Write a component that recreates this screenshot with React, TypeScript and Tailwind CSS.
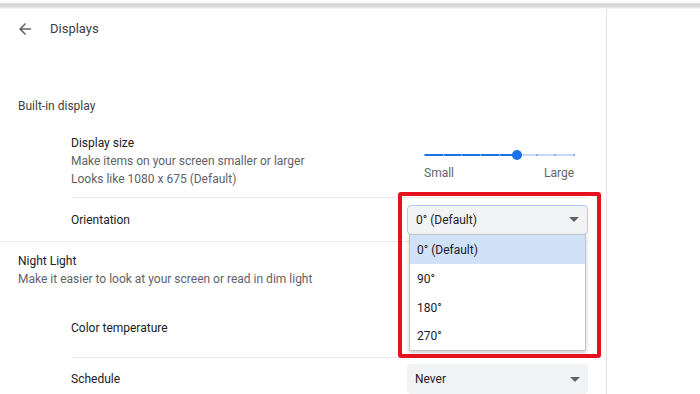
import React from "react";

const ticks = [0, 1, 2, 3, 4, 5, 6, 7, 8];
const thumbIndex = 5;

function Caret() {
  return (
    <svg width="10" height="5" viewBox="0 0 10 5" className="shrink-0">
      <path d="M0 0h10L5 5z" fill="#5f6368" />
    </svg>
  );
}

function SizeSlider() {
  const step = 149 / 8;
  return (
    <div className="flex w-[150px] flex-col">
      <div className="relative h-[20px]">
        <div className="absolute left-0 right-0 top-[9px] h-[2px] bg-[#c6dafc]" />
        <div
          className="absolute left-0 top-[9px] h-[2px] bg-[#1a73e8]"
          style={{ width: thumbIndex * step }}
        />
        {ticks.map((t) => (
          <div
            key={t}
            className={
              t < thumbIndex
                ? "absolute top-[9px] h-[2px] w-[1px] bg-[#8ab4f8]"
                : "absolute top-[9px] h-[2px] w-[2px] bg-[#8ab4f8]"
            }
            style={{ left: t * step }}
          />
        ))}
        <div
          className="absolute top-[5px] size-[10px] -translate-x-1/2 rounded-full bg-[#1a73e8]"
          style={{ left: thumbIndex * step }}
        />
      </div>
      <div className="mt-[1px] flex justify-between text-[12px] leading-[14px] text-[#5f6368]">
        <span>Small</span>
        <span>Large</span>
      </div>
    </div>
  );
}

export default function App() {
  return (
    <div className="relative h-[394px] w-[700px] overflow-hidden bg-white font-['Roboto',sans-serif] text-[12px] text-[#202124]">
      <div className="h-[9px] bg-[linear-gradient(to_bottom,#ffffff_0px,#f4f4f4_3px,#cfcfcf_4px,#dedede_7px,#ffffff_9px)]" />
      <div className="flex h-[385px]">
        <main className="w-[607px] shrink-0 border-r border-[#e3e3e3] pr-[18px]">
          <div className="flex h-[40px] items-center">
            <svg
              width="18"
              height="18"
              viewBox="0 0 24 24"
              className="ml-[16px] shrink-0"
            >
              <path
                d="M20 11H7.83l5.59-5.59L12 4l-8 8 8 8 1.41-1.41L7.83 13H20v-2z"
                fill="#5f6368"
              />
            </svg>
            <span className="ml-[16px] text-[13px] text-[#3c4043]">Displays</span>
          </div>

          <div className="mt-[47px] pl-[18px] leading-[20px] text-[#3c4043]">
            Built-in display
          </div>

          <div className="ml-[71px] mt-[18px] flex justify-between border-b border-[#ebebeb] pb-[9px]">
            <div className="flex flex-col leading-[18px]">
              <span className="text-[#202124]">Display size</span>
              <span className="text-[#5f6368]">
                Make items on your screen smaller or larger
              </span>
              <span className="text-[#5f6368]">Looks like 1080 x 675 (Default)</span>
            </div>
            <div className="mr-[14px] mt-[11px]">
              <SizeSlider />
            </div>
          </div>

          <div className="relative ml-[71px] flex h-[43px] items-center justify-between">
            <span>Orientation</span>
            <div className="flex h-[30px] w-[181px] items-center justify-between rounded-[4px] border border-[#aecbfa] bg-[#f1f3f4] pl-[8px] pr-[8px]">
              <span>0° (Default)</span>
              <Caret />
            </div>
            <div className="absolute right-[2px] top-[36px] z-10 w-[177px] border border-[#c4c4c4] bg-white shadow-[0_2px_4px_rgba(0,0,0,0.2)]">
              <div className="flex h-[29px] items-center bg-[#cfe2f8] pl-[7px]">0° (Default)</div>
              <div className="flex h-[29px] items-center pl-[7px]">90°</div>
              <div className="flex h-[29px] items-center pl-[7px]">180°</div>
              <div className="flex h-[28px] items-center pl-[7px]">270°</div>
            </div>
            <div className="pointer-events-none absolute right-[-13px] top-[-6px] z-20 h-[166px] w-[203px] rounded-[3px] border-[4px] border-[#e5121d]" />
          </div>

          <div className="border-t border-[#ebebeb] pl-[18px] pt-[10px] leading-[18px]">
            <div>Night Light</div>
            <div className="text-[#5f6368]">
              Make it easier to look at your screen or read in dim light
            </div>
          </div>

          <div className="ml-[71px] h-[70px] border-b border-[#ebebeb] pt-[31px] leading-[18px]">
            <span>Color temperature</span>
          </div>

          <div className="ml-[71px] flex h-[42px] items-start justify-between pt-[6px]">
            <span className="mt-[6px]">Schedule</span>
            <div className="flex h-[30px] w-[181px] items-center justify-between rounded-[4px] bg-[#f1f3f4] pl-[8px] pr-[8px]">
              <span>Never</span>
              <Caret />
            </div>
          </div>
        </main>
        <div className="flex-1" />
      </div>
    </div>
  );
}
